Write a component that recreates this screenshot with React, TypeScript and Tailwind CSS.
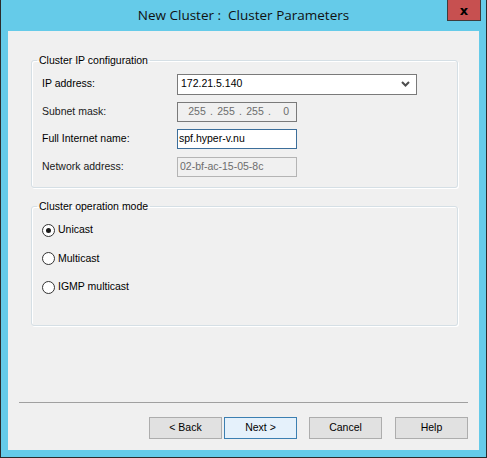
import React from 'react';

const font = { fontFamily: '"Liberation Sans", Arial, sans-serif' };

function Radio({ label, checked }: { label: string; checked?: boolean }) {
  return (
    <div className="flex h-[13px] items-center">
      <span className="flex h-[13px] w-[13px] items-center justify-center rounded-full border border-[#333333] bg-white">
        {checked && <span className="h-[5px] w-[5px] rounded-full bg-[#1a1a1a]" />}
      </span>
      <span className="ml-[3px] text-[10.5px] text-black">{label}</span>
    </div>
  );
}

function Btn({ label, focused, className }: { label: string; focused?: boolean; className?: string }) {
  return (
    <button
      className={
        'h-[22px] w-[73px] text-[10.5px] text-black ' +
        (focused ? 'border border-[#3c7fb1] bg-[#e5f1fb] ' : 'border border-[#adadad] bg-[#e1e1e1] ') +
        (className ?? '')
      }
    >
      {label}
    </button>
  );
}

export default function App() {
  return (
    <div className="flex h-[458px] w-[487px] flex-col border-x border-b border-[#2b2b2b] bg-[#65cbe9] px-[7px] pb-[7px]" style={font}>
      {/* title bar */}
      <div className="relative flex h-[31px] shrink-0 items-center justify-center">
        <span className="text-[13.5px] text-[#111111]" style={{ fontFamily: '"Open Sans", "Noto Sans", sans-serif' }}>
          New Cluster :&nbsp; Cluster Parameters
        </span>
        <div className="absolute right-[-2px] top-0 flex h-[21px] w-[34px] items-center justify-center border-x border-b border-[#3d3d3d] bg-[#c75050]">
          <span className="text-[13px] font-bold leading-none text-black" style={{ fontFamily: '"DejaVu Sans", sans-serif' }}>x</span>
        </div>
      </div>

      {/* client */}
      <div className="flex flex-1 flex-col bg-[#f0f0f0] px-[23px] pt-[22px]">
        <fieldset className="h-[135px] w-[427px] rounded-[3px] border border-[#d5dfe5] px-[10px] shadow-[inset_1px_1px_0_#ffffff,1px_1px_0_#ffffff]">
          <legend className="ml-[-5px] px-[2px] text-[10.5px] text-black">Cluster IP configuration</legend>
          <div className="mt-[5px] flex items-center">
            <span className="w-[135px] text-[10.5px] text-black">IP address:</span>
            <div className="flex h-[21px] w-[240px] items-center justify-between border border-[#7a7a7a] bg-white pl-[3px] pr-[6px]">
              <span className="text-[10.5px] text-black">172.21.5.140</span>
              <svg width="9" height="6" viewBox="0 0 9 6">
                <path d="M1 1 L4.5 4.5 L8 1" stroke="#4d4d4d" strokeWidth="2" fill="none" />
              </svg>
            </div>
          </div>
          <div className="mt-[7px] flex items-center">
            <span className="w-[135px] text-[10.5px] text-[#1a1a1a]">Subnet mask:</span>
            <div className="flex h-[20px] w-[120px] items-center border border-[#7a7a7a] bg-[#f0f0f0] pl-[8px] text-[10.5px] text-[#6d6d6d]">
              <span className="w-[22px] text-center">255</span>
              <span className="w-[7px] text-center">.</span>
              <span className="w-[22px] text-center">255</span>
              <span className="w-[7px] text-center">.</span>
              <span className="w-[22px] text-center">255</span>
              <span className="w-[7px] text-center">.</span>
              <span className="w-[16px] text-right">0</span>
            </div>
          </div>
          <div className="mt-[7px] flex items-center">
            <span className="w-[135px] text-[10.5px] text-black">Full Internet name:</span>
            <div className="flex h-[20px] w-[120px] items-center border border-[#3c6e9a] bg-white pl-[1px] text-[10.5px] text-black">
              spf.hyper-v.nu
            </div>
          </div>
          <div className="mt-[8px] flex items-center">
            <span className="w-[135px] text-[10.5px] text-[#1a1a1a]">Network address:</span>
            <div className="flex h-[20px] w-[120px] items-center border border-[#b4b4b4] bg-[#f0f0f0] pl-[2px] text-[10.5px] text-[#6d6d6d]">
              02-bf-ac-15-05-8c
            </div>
          </div>
        </fieldset>

        <fieldset className="mt-[11px] h-[127px] w-[427px] rounded-[3px] border border-[#d5dfe5] px-[10px] shadow-[inset_1px_1px_0_#ffffff,1px_1px_0_#ffffff]">
          <legend className="ml-[-5px] px-[2px] text-[10.5px] text-black">Cluster operation mode</legend>
          <div className="mt-[9px] flex flex-col gap-[15.5px]">
            <Radio label="Unicast" checked />
            <Radio label="Multicast" />
            <Radio label="IGMP multicast" />
          </div>
        </fieldset>

        <div className="ml-[-12px] mt-[76px] h-[2px] w-[449px] border-t border-[#a0a0a0] border-b-white" />

        <div className="mr-[-12px] mt-[13px] flex items-start justify-end">
          <Btn label="< Back" />
          <Btn label="Next >" focused className="ml-[2px]" />
          <Btn label="Cancel" className="ml-[12px]" />
          <Btn label="Help" className="ml-[13px]" />
        </div>
      </div>
    </div>
  );
}
